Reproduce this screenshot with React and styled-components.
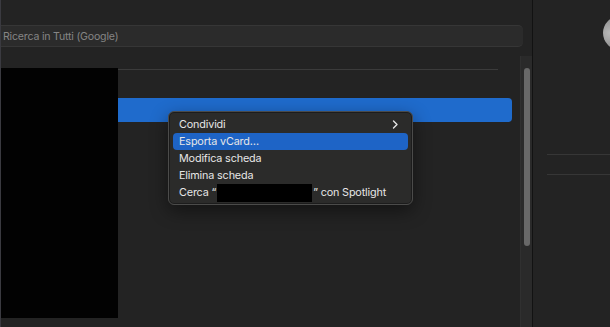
import React from "react";
import styled, { createGlobalStyle } from "styled-components";

const GlobalStyle = createGlobalStyle`
  html, body {
    margin: 0;
    padding: 0;
    background: #232323;
  }
  body {
    font-family: "Inter", "Noto Sans", "Liberation Sans", sans-serif;
    -webkit-font-smoothing: antialiased;
  }
`;

const Window = styled.div`
  position: relative;
  width: 610px;
  height: 327px;
  display: flex;
  overflow: hidden;
  background: #232323;
`;

const Main = styled.div`
  width: 532px;
  display: flex;
  flex-direction: column;
  border-left: 1px solid #3a3a40;
  box-sizing: border-box;
`;

const Header = styled.div`
  height: 25px;
  flex-shrink: 0;
`;

const SearchBar = styled.div`
  height: 20px;
  margin-right: 9px;
  display: flex;
  align-items: center;
  padding-left: 2px;
  background: #2b2b2b;
  border-top: 1px solid #363636;
  border-bottom: 1px solid #363636;
  border-radius: 0 5px 5px 0;
  color: #858585;
  font-size: 10.6px;
  letter-spacing: -0.2px;
  flex-shrink: 0;
`;

const Body = styled.div`
  flex: 1;
  display: flex;
`;

const LeftCol = styled.div`
  width: 117px;
  display: flex;
  flex-direction: column;
  padding-top: 21px;
  padding-bottom: 9px;
`;

const Redacted = styled.div`
  flex: 1;
  background: #020202;
`;

const ListArea = styled.div`
  flex: 1;
  display: flex;
  flex-direction: column;
  padding-top: 22px;
`;

const Rule = styled.div`
  height: 1px;
  margin-right: 22px;
  background: #3b3b3b;
`;

const SelectedRow = styled.div`
  height: 24px;
  margin-top: 28px;
  margin-right: 8px;
  background: #1f6bcc;
  border-radius: 0 4px 4px 0;
`;

const ScrollTrack = styled.div`
  width: 12px;
  margin-top: 9px;
  background: #2a2a2a;
  border-left: 1px solid #303030;
  display: flex;
  justify-content: center;
  padding-top: 12px;
  box-sizing: border-box;
`;

const ScrollThumb = styled.div`
  width: 6px;
  height: 178px;
  border-radius: 3px;
  background: #686868;
`;

const Divider = styled.div`
  width: 1px;
  background: #121212;
`;

const RightPanel = styled.div`
  flex: 1;
  display: flex;
  flex-direction: column;
  padding-top: 154px;
  padding-left: 14px;
`;

const PanelLine = styled.div`
  height: 1px;
  background: #363636;
  margin-bottom: ${(p) => p.$gap || 0}px;
`;

const Avatar = styled.div`
  position: absolute;
  left: 603px;
  top: 16px;
  width: 34px;
  height: 34px;
  border-radius: 50%;
  background: radial-gradient(circle at 20% 50%, #b8b8b8, #7d7d7d 70%);
`;

const Menu = styled.div`
  position: absolute;
  left: 168px;
  top: 111px;
  width: 245px;
  box-sizing: border-box;
  padding: 4px 4px 3px;
  background: #2b2b2a;
  border: 1px solid #4b4b4a;
  border-radius: 6px;
  box-shadow: 0 6px 18px rgba(0, 0, 0, 0.45), inset 0 0 0 1px #1c1c1c;
  display: flex;
  flex-direction: column;
`;

const Item = styled.div`
  height: 17px;
  display: flex;
  align-items: center;
  padding: 0 6px;
  border-radius: 4px;
  font-size: 10.8px;
  letter-spacing: -0.15px;
  color: #e6e6e6;
  background: ${(p) => (p.$active ? "#1e64c6" : "transparent")};
  white-space: nowrap;
`;

const Label = styled.span`
  flex: 1;
`;

const Chevron = styled.svg`
  width: 7px;
  height: 9px;
  margin-right: 3px;
`;

const Blackout = styled.span`
  display: inline-block;
  width: 95px;
  height: 18px;
  background: #000;
  margin: 0 1px;
  vertical-align: middle;
`;

export default function App() {
  return (
    <>
      <GlobalStyle />
      <Window>
        <Main>
          <Header />
          <SearchBar>Ricerca in Tutti (Google)</SearchBar>
          <Body>
            <LeftCol>
              <Redacted />
            </LeftCol>
            <ListArea>
              <Rule />
              <SelectedRow />
            </ListArea>
            <ScrollTrack>
              <ScrollThumb />
            </ScrollTrack>
          </Body>
        </Main>
        <Divider />
        <RightPanel>
          <PanelLine $gap={19} />
          <PanelLine />
        </RightPanel>
        <Avatar />
        <Menu>
          <Item>
            <Label>Condividi</Label>
            <Chevron viewBox="0 0 7 9">
              <path d="M1.5 1 L5 4.5 L1.5 8" fill="none" stroke="#e6e6e6" strokeWidth="1.4" strokeLinecap="round" strokeLinejoin="round" />
            </Chevron>
          </Item>
          <Item $active>Esporta vCard…</Item>
          <Item>Modifica scheda</Item>
          <Item>Elimina scheda</Item>
          <Item>
            Cerca “<Blackout />” con Spotlight
          </Item>
        </Menu>
      </Window>
    </>
  );
}
